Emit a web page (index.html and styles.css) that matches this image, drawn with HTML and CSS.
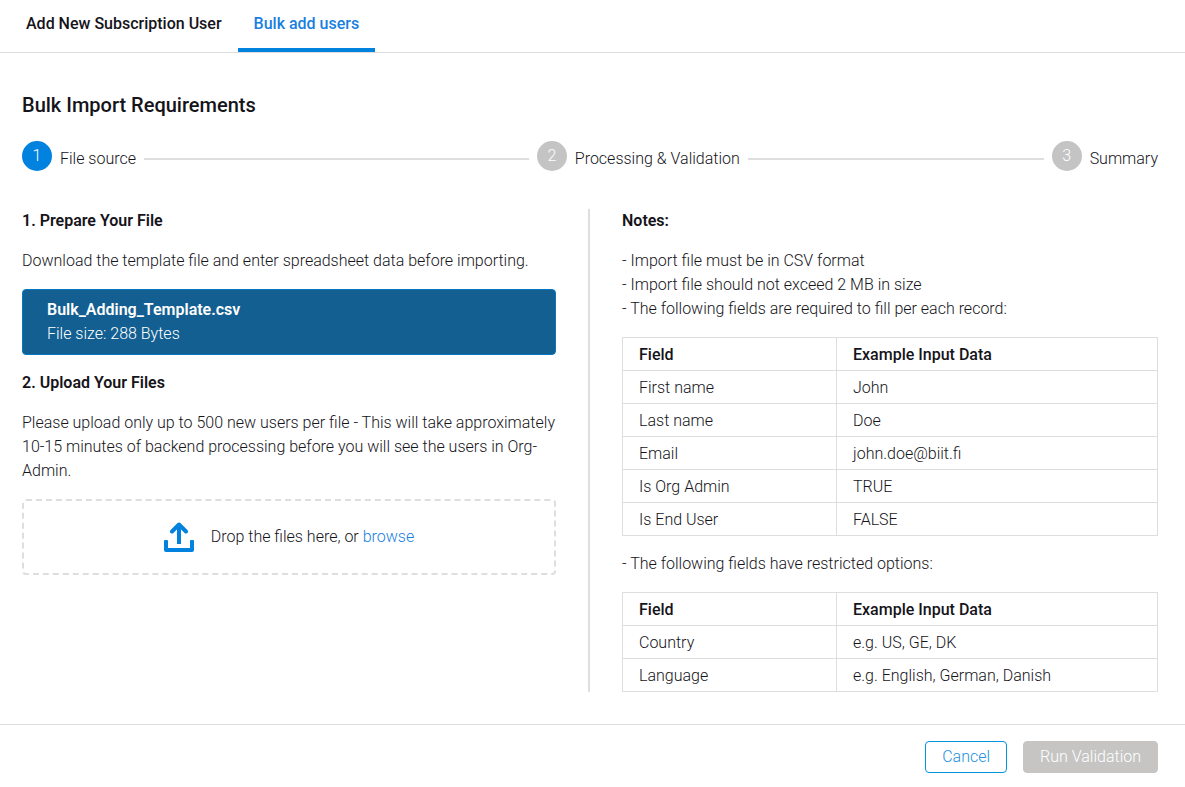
FILE: index.html
```html
<!DOCTYPE html>
<html lang="en">
<head>
<meta charset="utf-8">
<meta name="viewport" content="width=device-width, initial-scale=1">
<title>Bulk add users</title>
<link rel="stylesheet" href="styles.css">
</head>
<body>
<nav class="tabs" role="tablist">
  <button class="tab" type="button" role="tab" aria-selected="false">Add New Subscription User</button>
  <button class="tab tab-active" type="button" role="tab" aria-selected="true">Bulk add users</button>
</nav>
<main class="content">
  <h1 class="title">Bulk Import Requirements</h1>
  <ol class="stepper">
    <li class="step step-active"><span class="step-number">1</span><span class="step-label">File source</span></li>
    <li class="step"><span class="step-number">2</span><span class="step-label">Processing &amp; Validation</span></li>
    <li class="step"><span class="step-number">3</span><span class="step-label">Summary</span></li>
  </ol>
  <div class="columns">
    <section class="column column-upload">
      <h2 class="subtitle">1. Prepare Your File</h2>
      <p class="text">Download the template file and enter spreadsheet data before importing.</p>
      <button class="template" type="button">
        <span class="template-name">Bulk_Adding_Template.csv</span>
        <span class="template-size">File size: 288 Bytes</span>
      </button>
      <h2 class="subtitle">2. Upload Your Files</h2>
      <p class="text">Please upload only up to 500 new users per file - This will take approximately 10-15 minutes of backend processing before you will see the users in Org-Admin.</p>
      <div class="dropzone">
        <svg class="dropzone-icon" viewBox="0 0 30 30" fill="none" stroke="currentColor" stroke-width="4" aria-hidden="true">
          <path d="M1 18h2q1 0 1 1v7h22v-7q0-1 1-1h2q1 0 1 1v9q0 2-2 2H2q-2 0-2-2v-9q0-1 1-1z" fill="currentColor" stroke="none"/>
          <path d="M15 22V4"/>
          <path d="M8 9.500 15 2.500 22 9.500" stroke-linecap="round" stroke-linejoin="round"/>
        </svg>
        <span>Drop the files here, or <a class="browse" href="#">browse</a></span>
      </div>
    </section>
    <section class="column column-notes">
      <h2 class="subtitle">Notes:</h2>
      <p class="text">- Import file must be in CSV format<br>- Import file should not exceed 2 MB in size<br>- The following fields are required to fill per each record:</p>
      <table class="fields">
        <thead><tr><th>Field</th><th>Example Input Data</th></tr></thead>
        <tbody>
          <tr><td>First name</td><td>John</td></tr>
          <tr><td>Last name</td><td>Doe</td></tr>
          <tr><td>Email</td><td>john.doe@biit.fi</td></tr>
          <tr><td>Is Org Admin</td><td>TRUE</td></tr>
          <tr><td>Is End User</td><td>FALSE</td></tr>
        </tbody>
      </table>
      <p class="text">- The following fields have restricted options:</p>
      <table class="fields">
        <thead><tr><th>Field</th><th>Example Input Data</th></tr></thead>
        <tbody>
          <tr><td>Country</td><td>e.g. US, GE, DK</td></tr>
          <tr><td>Language</td><td>e.g. English, German, Danish</td></tr>
        </tbody>
      </table>
    </section>
  </div>
</main>
<footer class="footer">
  <button class="button button-outline" type="button">Cancel</button>
  <button class="button button-primary" type="button" disabled>Run Validation</button>
</footer>
</body>
</html>
```
FILE: styles.css
```css
* {
  box-sizing: border-box;
}

body {
  margin: 0;
  background: #fff;
  color: #15141a;
  font: 300 16px/24px Roboto, sans-serif;
}

button {
  font: inherit;
  cursor: pointer;
}

.tabs {
  display: flex;
  padding: 0 10px;
  border-bottom: 1px solid #dedede;
}

.tab {
  height: 52px;
  padding: 0 16px;
  border: 0;
  border-bottom: 4px solid transparent;
  background: none;
  color: inherit;
  font-weight: 500;
}

.tab-active {
  border-bottom-color: #0082de;
  color: #1880df;
}

.content {
  padding: 38px 27px 32px 22px;
}

.title {
  margin: 0 0 22px;
  font-size: 20px;
  font-weight: 500;
  line-height: 28px;
}

.stepper {
  display: flex;
  gap: 8px;
  margin: 0 0 32px;
  padding: 0;
  list-style: none;
}

.step {
  display: flex;
  align-items: center;
  gap: 8px;
}

.step:not(:last-child) {
  flex: 1;
}

.step:not(:last-child)::after {
  content: "";
  flex: 1;
  height: 2px;
  background: #dedede;
}

.step-number {
  width: 30px;
  height: 30px;
  margin-bottom: 6px;
  border-radius: 50%;
  background: #c4c4c4;
  color: #fff;
  line-height: 30px;
  text-align: center;
}

.step-active .step-number {
  background: #0082de;
}

.columns {
  display: grid;
  grid-template-columns: 1fr 1fr;
}

.column-upload {
  padding-right: 32px;
  border-right: 2px solid #dedede;
}

.column-notes {
  padding-left: 32px;
}

.subtitle {
  margin: 0 0 16px;
  font-size: 16px;
  font-weight: 600;
  line-height: 24px;
}

.text {
  margin: 0 0 16px;
}

.template {
  display: flex;
  flex-direction: column;
  width: 100%;
  margin: 0 0 16px;
  padding: 8px 24px;
  border: 1px solid #0878be;
  border-radius: 4px;
  background: #135f91;
  color: #fff;
  text-align: left;
}

.template-name {
  font-weight: 600;
}

.dropzone {
  display: flex;
  align-items: center;
  justify-content: center;
  gap: 17px;
  height: 76px;
  border: 2px dashed #dedede;
  border-radius: 4px;
}

.dropzone-icon {
  width: 30px;
  height: 30px;
  color: #0082de;
}

.browse {
  color: #1880df;
  text-decoration: none;
}

.fields {
  width: 100%;
  margin: 0 0 16px;
  border-collapse: collapse;
  table-layout: fixed;
}

.fields:last-child {
  margin-bottom: 0;
}

.fields th,
.fields td {
  padding: 5px 16px 3px;
  border: 1px solid #dedede;
  text-align: left;
}

.fields th {
  font-weight: 500;
}

.fields th:first-child {
  width: 40%;
}

.footer {
  display: flex;
  justify-content: flex-end;
  gap: 16px;
  padding: 16px 27px 14px;
  border-top: 1px solid #dedede;
}

.button {
  height: 32px;
  padding: 0 16px;
  border: 1px solid;
  border-radius: 4px;
}

.button-outline {
  border-color: #0095de;
  background: #fff;
  color: #2490de;
}

.button-primary {
  border-color: #c6c5c4;
  background: #c6c5c4;
  color: #fff;
  cursor: default;
}
```
